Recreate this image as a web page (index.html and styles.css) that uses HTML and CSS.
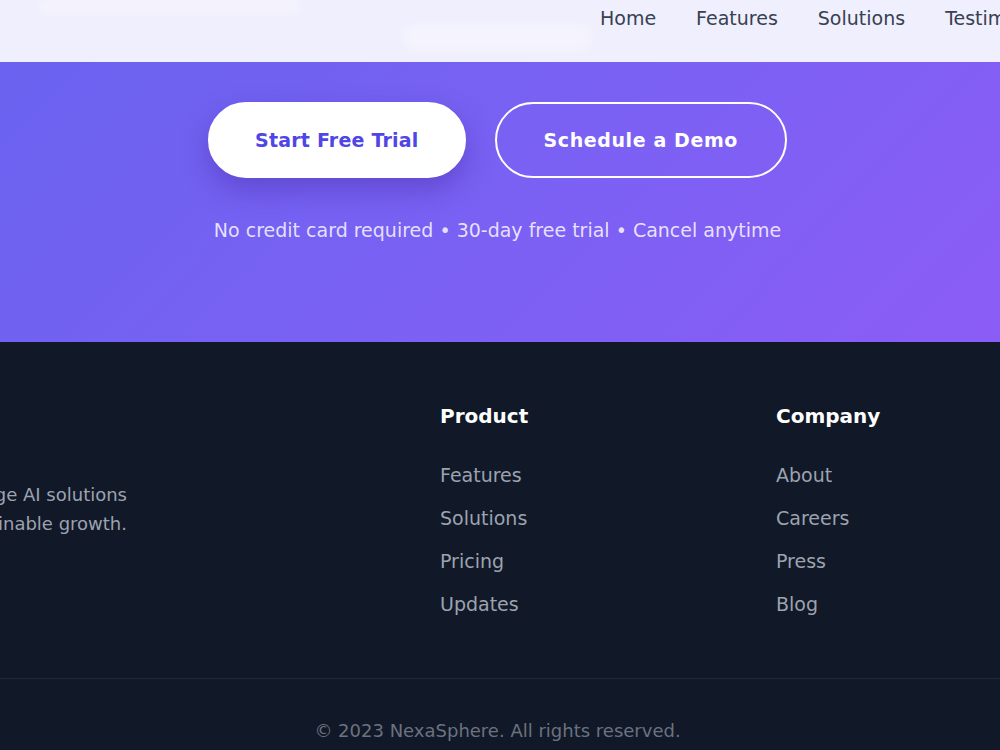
FILE: index.html
```html
<html lang="en">
<head>
    <meta charset="UTF-8">
    <meta name="viewport" content="width=device-width, initial-scale=1.0">
    <title>NexaSphere</title>
    <link rel="stylesheet" href="styles.css">
</head>
<body>
<header class="header">
    <div class="header-inner">
        <div class="ghost ghost-logo"></div>
        <div class="ghost ghost-btn"></div>
        <nav class="nav">
            <a href="#">Home</a>
            <a href="#">Features</a>
            <a href="#">Solutions</a>
            <a href="#">Testimonials</a>
            <a href="#">Pricing</a>
        </nav>
    </div>
</header>

<section class="cta">
    <div class="cta-buttons">
        <a href="#" class="btn btn-primary">Start Free Trial</a>
        <a href="#" class="btn btn-outline">Schedule a Demo</a>
    </div>
    <p class="cta-note">No credit card required • 30-day free trial • Cancel anytime</p>
</section>

<footer class="footer">
    <div class="footer-grid">
        <div class="footer-brand">
            <p class="brand-text">Empowering businesses with cutting-edge AI solutions<br>for smarter decisions and sustainable growth.</p>
        </div>
        <div class="footer-col">
            <h4>Product</h4>
            <ul>
                <li><a href="#">Features</a></li>
                <li><a href="#">Solutions</a></li>
                <li><a href="#">Pricing</a></li>
                <li><a href="#">Updates</a></li>
            </ul>
        </div>
        <div class="footer-col">
            <h4>Company</h4>
            <ul>
                <li><a href="#">About</a></li>
                <li><a href="#">Careers</a></li>
                <li><a href="#">Press</a></li>
                <li><a href="#">Blog</a></li>
            </ul>
        </div>
        <div class="footer-col">
            <h4>Support</h4>
            <ul>
                <li><a href="#">Help Center</a></li>
                <li><a href="#">Contact</a></li>
                <li><a href="#">Privacy</a></li>
                <li><a href="#">Terms</a></li>
            </ul>
        </div>
    </div>
    <div class="footer-bottom">
        <p>© 2023 NexaSphere. All rights reserved.</p>
    </div>
</footer>
</body>
</html>
```

FILE: styles.css
```css
/* Base */
html, body { margin: 0; padding: 0; overflow: hidden; }
html { background-color: #111827; }
body { font-family: "DejaVu Sans", "Open Sans", sans-serif; }
a { text-decoration: none; color: inherit; }

/* Header */
.header { height: 62px; background-color: #f0effd; overflow: hidden; }
.header-inner { display: flex; align-items: flex-start; white-space: nowrap; }
.ghost { background-color: rgba(255, 255, 255, 0.35); filter: blur(5px); border-radius: 8px; flex-shrink: 0; }
.ghost-logo { margin-left: 40px; width: 260px; height: 12px; }
.ghost-btn { margin-left: 105px; margin-top: 26px; width: 185px; height: 24px; }
.nav { display: flex; gap: 40px; margin-left: 10px; padding-top: 5px; font-size: 19px; color: #374151; line-height: 27px; }

/* Call to action */
.cta { height: 280px; box-sizing: border-box; padding: 40px 5px 0 0; background: linear-gradient(135deg, #6a62f0 0%, #7a61f3 50%, #8b5cf6 100%); text-align: center; }
.cta-buttons { display: flex; justify-content: center; gap: 29px; }
.btn { display: inline-block; padding: 22px 45px; border: 2px solid #fff; border-radius: 999px; font-size: 19px; font-weight: 700; line-height: 28px; letter-spacing: 0.2px; }
.btn-primary { background-color: #fff; color: #4f46e5; box-shadow: 0 12px 28px rgba(60, 30, 150, 0.35); }
.btn-outline { color: #fff; letter-spacing: 0.6px; padding: 22px 47px; }
.cta-note { margin: 39px 0 0; font-size: 19px; line-height: 27px; color: rgba(255, 255, 255, 0.82); }

/* Footer */
.footer { background-color: #111827; padding: 59px 0 48px; }
.footer-grid { display: grid; grid-template-columns: 568px 288px 288px 288px; column-gap: 48px; margin-left: -176px; }
.footer-brand { display: flex; justify-content: flex-end; padding: 79px 265px 0 0; }
.brand-text { margin: 0; text-align: right; white-space: nowrap; font-size: 18px; line-height: 29px; color: #9ca3af; }
.footer-col h4 { margin: 0 0 31px; font-size: 20px; line-height: 30px; font-weight: 700; color: #fff; }
.footer-col ul { list-style: none; margin: 0; padding: 0; }
.footer-col li { margin-bottom: 16px; font-size: 19px; line-height: 27px; color: #9ca3af; }
.footer-col li:last-child { margin-bottom: 0; }
.footer-bottom { margin-top: 60px; border-top: 1px solid #1f2937; padding-top: 38px; text-align: center; }
.footer-bottom p { margin: 0; padding-right: 5px; font-size: 18px; line-height: 27px; color: #6b7280; }
```
